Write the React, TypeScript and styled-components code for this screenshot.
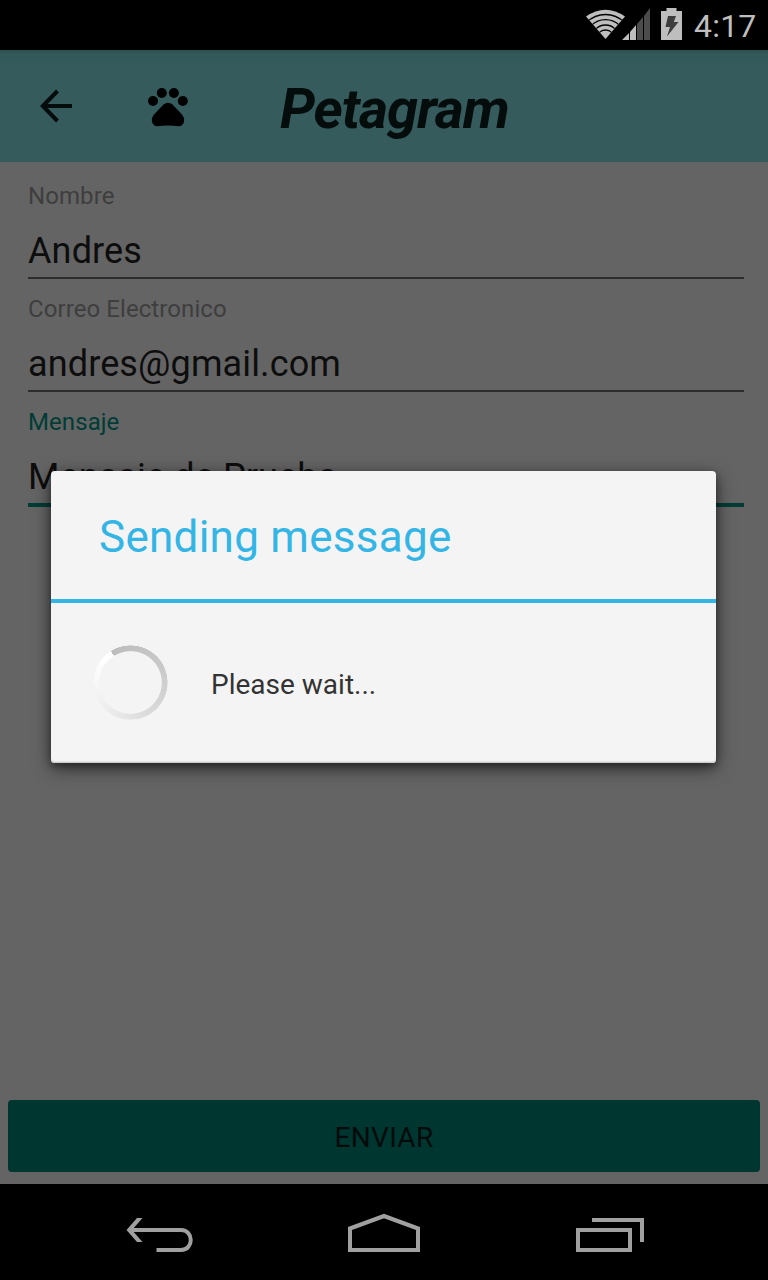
import React from "react";
import styled, { createGlobalStyle } from "styled-components";

const GlobalStyle = createGlobalStyle`
  * { box-sizing: border-box; }
  body { margin: 0; background: #000; font-family: Roboto, "Liberation Sans", sans-serif; }
`;

const Screen = styled.div`
  position: relative;
  width: 768px;
  height: 1280px;
  display: flex;
  flex-direction: column;
  overflow: hidden;
  background: #646464;
`;

const StatusBar = styled.header`
  height: 50px;
  flex: none;
  display: flex;
  justify-content: flex-end;
  align-items: center;
  padding-right: 12px;
  background: #000;
`;

const Clock = styled.span`
  width: 62px;
  margin-left: 11px;
  padding-top: 2px;
  font-size: 32px;
  line-height: 40px;
  letter-spacing: 0.2px;
  white-space: nowrap;
  color: #bebebe;
`;

const Toolbar = styled.div`
  height: 112px;
  flex: none;
  display: flex;
  align-items: center;
  background: linear-gradient(#2c4e50 0, #32585a 3px, #355b5d 18px);
`;

const BackArrow = styled.svg`
  margin-left: 40px;
`;

const Paw = styled.svg`
  margin: 2px 0 0 73px;
`;

const AppTitle = styled.h1`
  margin: 5px 0 0 91px;
  font-size: 56px;
  line-height: 66px;
  font-weight: 700;
  font-style: italic;
  letter-spacing: -1.1px;
  color: #050c0c;
`;

const Form = styled.main`
  flex: 1;
  display: flex;
  flex-direction: column;
  gap: 16px;
  padding: 20px 24px 0 28px;
`;

const Field = styled.div<{ $active?: boolean }>`
  display: flex;
  flex-direction: column;
  gap: 20px;
  padding-bottom: 5px;
  color: ${(p) => (p.$active ? "#003c35" : "#3e3e3e")};
  border-bottom: ${(p) => (p.$active ? "4px solid #003c35" : "2px solid #2d2d2d")};
`;

const Label = styled.label`
  font-size: 24px;
  line-height: 28px;
  letter-spacing: 0.08px;
`;

const Value = styled.span`
  font-size: 36px;
  line-height: 42px;
  letter-spacing: 0.13px;
  color: #0d0d0d;
`;

const SendButton = styled.button`
  height: 72px;
  flex: none;
  margin: 0 8px 12px;
  padding: 3px 0 0;
  border: 0;
  border-radius: 4px;
  background: #003630;
  color: #050b0a;
  font: 400 28px/34px Roboto, sans-serif;
  letter-spacing: 0.35px;
`;

const NavBar = styled.nav`
  height: 96px;
  flex: none;
  background: #000;
  display: flex;
  justify-content: space-between;
  padding: 26px 124px 0 126px;
`;

const Dialog = styled.section`
  position: absolute;
  top: 471px;
  left: 51px;
  width: 665px;
  height: 292px;
  display: flex;
  flex-direction: column;
  border-radius: 4px;
  background: #f4f4f4;
  box-shadow: inset 0 -1px 0 #cfcfcf, inset 0 -2px 0 #e4e4e4, 0 5px 18px rgba(0, 0, 0, 0.58), 0 3px 7px rgba(0, 0, 0, 0.3);
`;

const DialogTitle = styled.h2`
  margin: 0;
  height: 132px;
  padding: 40px 48px 0;
  border-bottom: 4px solid #33b5e5;
  font-size: 44px;
  line-height: 52px;
  font-weight: 400;
  letter-spacing: 0.27px;
  color: #33b5e5;
`;

const DialogBody = styled.div`
  flex: 1;
  display: flex;
  align-items: center;
  gap: 43px;
  padding: 0 0 1px 42px;
`;

const Spinner = styled.div`
  width: 75px;
  height: 75px;
  border-radius: 50%;
  background: conic-gradient(from -32deg, #bcbcbc 0deg, #c8c8c8 90deg, #dadada 180deg, #ececec 250deg, #f5f5f5 290deg, #fff 345deg, #fff 360deg);
  mask: radial-gradient(circle, transparent 30.8px, #000 31.8px, #000 36.8px, transparent 37.5px);
`;

const Message = styled.p`
  margin: 4px 0 0;
  font-size: 28px;
  line-height: 34px;
  color: #333;
`;

const StatusIcons = () => (
  <svg width="97" height="42" viewBox="586 4 97 42">
    <defs>
      <clipPath id="wifi">
        <path d="M605.5 39 586 16.500Q605.500 3 625 16.500Z" />
      </clipPath>
    </defs>
    <g clipPath="url(#wifi)">
      <rect x="586" y="4" width="40" height="36" fill="#bebebe" />
      <g fill="none" stroke="#000" strokeWidth="1.3">
        <circle cx="605.5" cy="39" r="9" />
        <circle cx="605.5" cy="39" r="14" />
        <circle cx="605.5" cy="40" r="20.300" />
        <circle cx="605.5" cy="41" r="26.500" />
      </g>
    </g>
    <path fill="#bebebe" d="M622 40 629 33V40ZM630 32 636 25V40H630Z" />
    <path fill="#4c4c4c" d="M637 24 643 17V40H637ZM644 16 650 8V40H644Z" />
    <path fill="#bebebe" d="M661 11H666.500V8H676.500V11H682V40H661Z" />
    <path fill="#3d3d3d" d="M668 16H676L673.800 22H678.500L667 36.500 670 27H665.500Z" />
  </svg>
);

const FIELDS = [
  { label: "Nombre", value: "Andres" },
  { label: "Correo Electronico", value: "andres@gmail.com" },
  { label: "Mensaje", value: "Mensaje de Prueba", active: true },
];

export default function App() {
  return (
    <Screen>
      <GlobalStyle />
      <StatusBar>
        <StatusIcons />
        <Clock>4:17</Clock>
      </StatusBar>
      <Toolbar>
        <BackArrow width="34" height="34" viewBox="0 0 34 34" fill="none" stroke="#050c0c" strokeWidth="4">
          <path d="M32 17H4M17.500 2 2.800 17 17.500 32" />
        </BackArrow>
        <Paw width="42" height="40" viewBox="147 87 42 40">
          <circle cx="153" cy="101" r="5" />
          <circle cx="161.800" cy="93" r="5" />
          <circle cx="173.900" cy="93" r="5" />
          <circle cx="182.800" cy="101" r="5" />
          <path d="M163.500 104.500Q168 101 172.500 104.500L181.500 114Q185.500 118.500 183.800 122.500Q182.500 126.300 178.500 126.200Q168 124.800 157.500 126.200Q153.500 126.300 152.200 122.500Q150.500 118.500 154.500 114Z" />
        </Paw>
        <AppTitle>Petagram</AppTitle>
      </Toolbar>
      <Form>
        {FIELDS.map((f) => (
          <Field key={f.label} $active={f.active}>
            <Label>{f.label}</Label>
            <Value>{f.value}</Value>
          </Field>
        ))}
      </Form>
      <SendButton>ENVIAR</SendButton>
      <NavBar>
        <svg width="70" height="44" viewBox="126 1210 70 44" fill="none" stroke="#a0a0a0" strokeWidth="4">
          <path d="M131 1230H181C194 1230 194 1250 181 1250H156.500" />
          <path fill="#a0a0a0" stroke="none" d="M126.500 1230 137 1218H142.500L132 1230 142.500 1242H137Z" />
        </svg>
        <svg width="76" height="44" viewBox="347 1210 76 44" fill="none" stroke="#a0a0a0" strokeWidth="4">
          <path d="M350 1228.500 384 1216 418 1228.500V1250H350Z" />
        </svg>
        <svg width="70" height="44" viewBox="574 1210 70 44" fill="none" stroke="#a0a0a0" strokeWidth="4">
          <path d="M578 1230H630V1250H578ZM592 1220H642V1242" />
        </svg>
      </NavBar>
      <Dialog role="dialog">
        <DialogTitle>Sending message</DialogTitle>
        <DialogBody>
          <Spinner />
          <Message>Please wait...</Message>
        </DialogBody>
      </Dialog>
    </Screen>
  );
}
